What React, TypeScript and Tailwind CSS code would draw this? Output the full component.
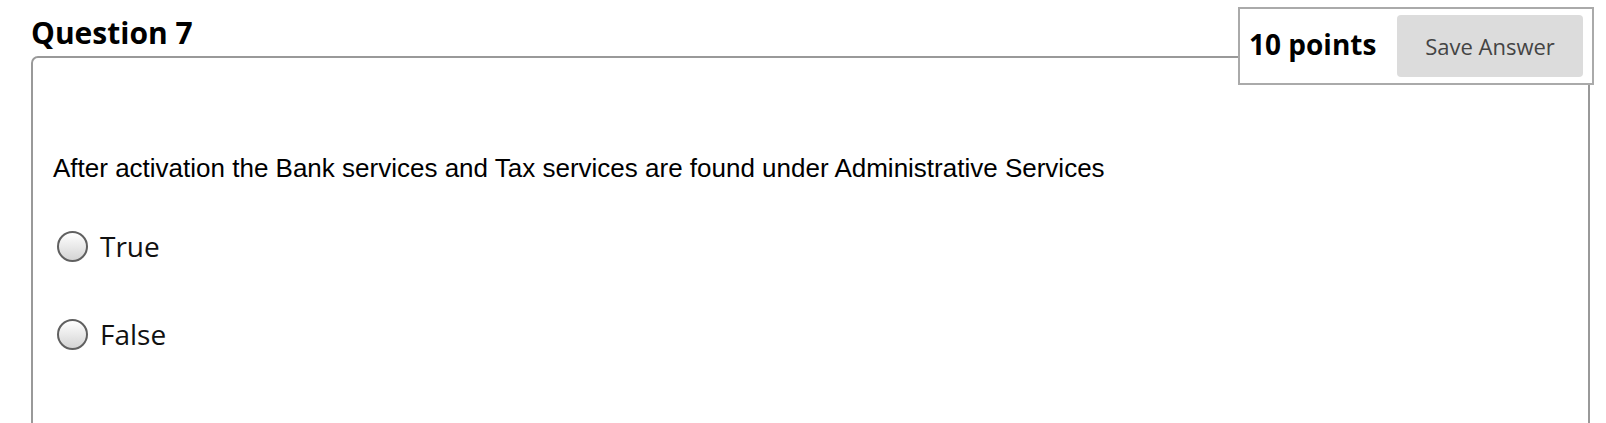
import React from 'react';

const Radio = ({ label }: { label: string }) => (
  <label className="flex items-center h-[36px] gap-[12px] ml-[4px]">
    <span className="block w-[31px] h-[31px] rounded-full border-2 border-[#606060] bg-linear-to-b from-[#ffffff] to-[#d4d4d4] shrink-0" />
    <span className="text-[28px] leading-[36px] text-[#111]">{label}</span>
  </label>
);

export default function App() {
  return (
    <div className="relative w-full h-[423px] overflow-hidden bg-white font-['Open_Sans',sans-serif]">
      <div className="pl-[31px] pr-[16px] pt-[15px]">
        <h2 className="text-[30px] leading-[36px] font-bold text-black">Question 7</h2>

        {/* question card */}
        <div className="mt-[5px] border-2 border-[#999] rounded-tl-[7px] min-h-[420px] pl-[20px] pt-[95px]">
          <p className="font-['Liberation_Sans',Arial,sans-serif] text-[26px] leading-[30px] text-black">
            After activation the Bank services and Tax services are found under Administrative Services
          </p>
          <div className="mt-[45px] flex flex-col gap-[52px]">
            <Radio label="True" />
            <Radio label="False" />
          </div>
        </div>
      </div>

      {/* points + save, sits over the card border */}
      <div className="absolute left-[1238px] top-[7px] w-[356px] h-[78px] border-2 border-[#aaa] bg-white flex items-center justify-between pl-[9px] pr-[9px]">
        <span className="text-[28px] font-bold text-black leading-none mb-[4px]">10 points</span>
        <button className="w-[186px] h-[62px] rounded-[4px] bg-[#dcdcdc] text-[22px] text-[#444]">
          Save Answer
        </button>
      </div>
    </div>
  );
}
